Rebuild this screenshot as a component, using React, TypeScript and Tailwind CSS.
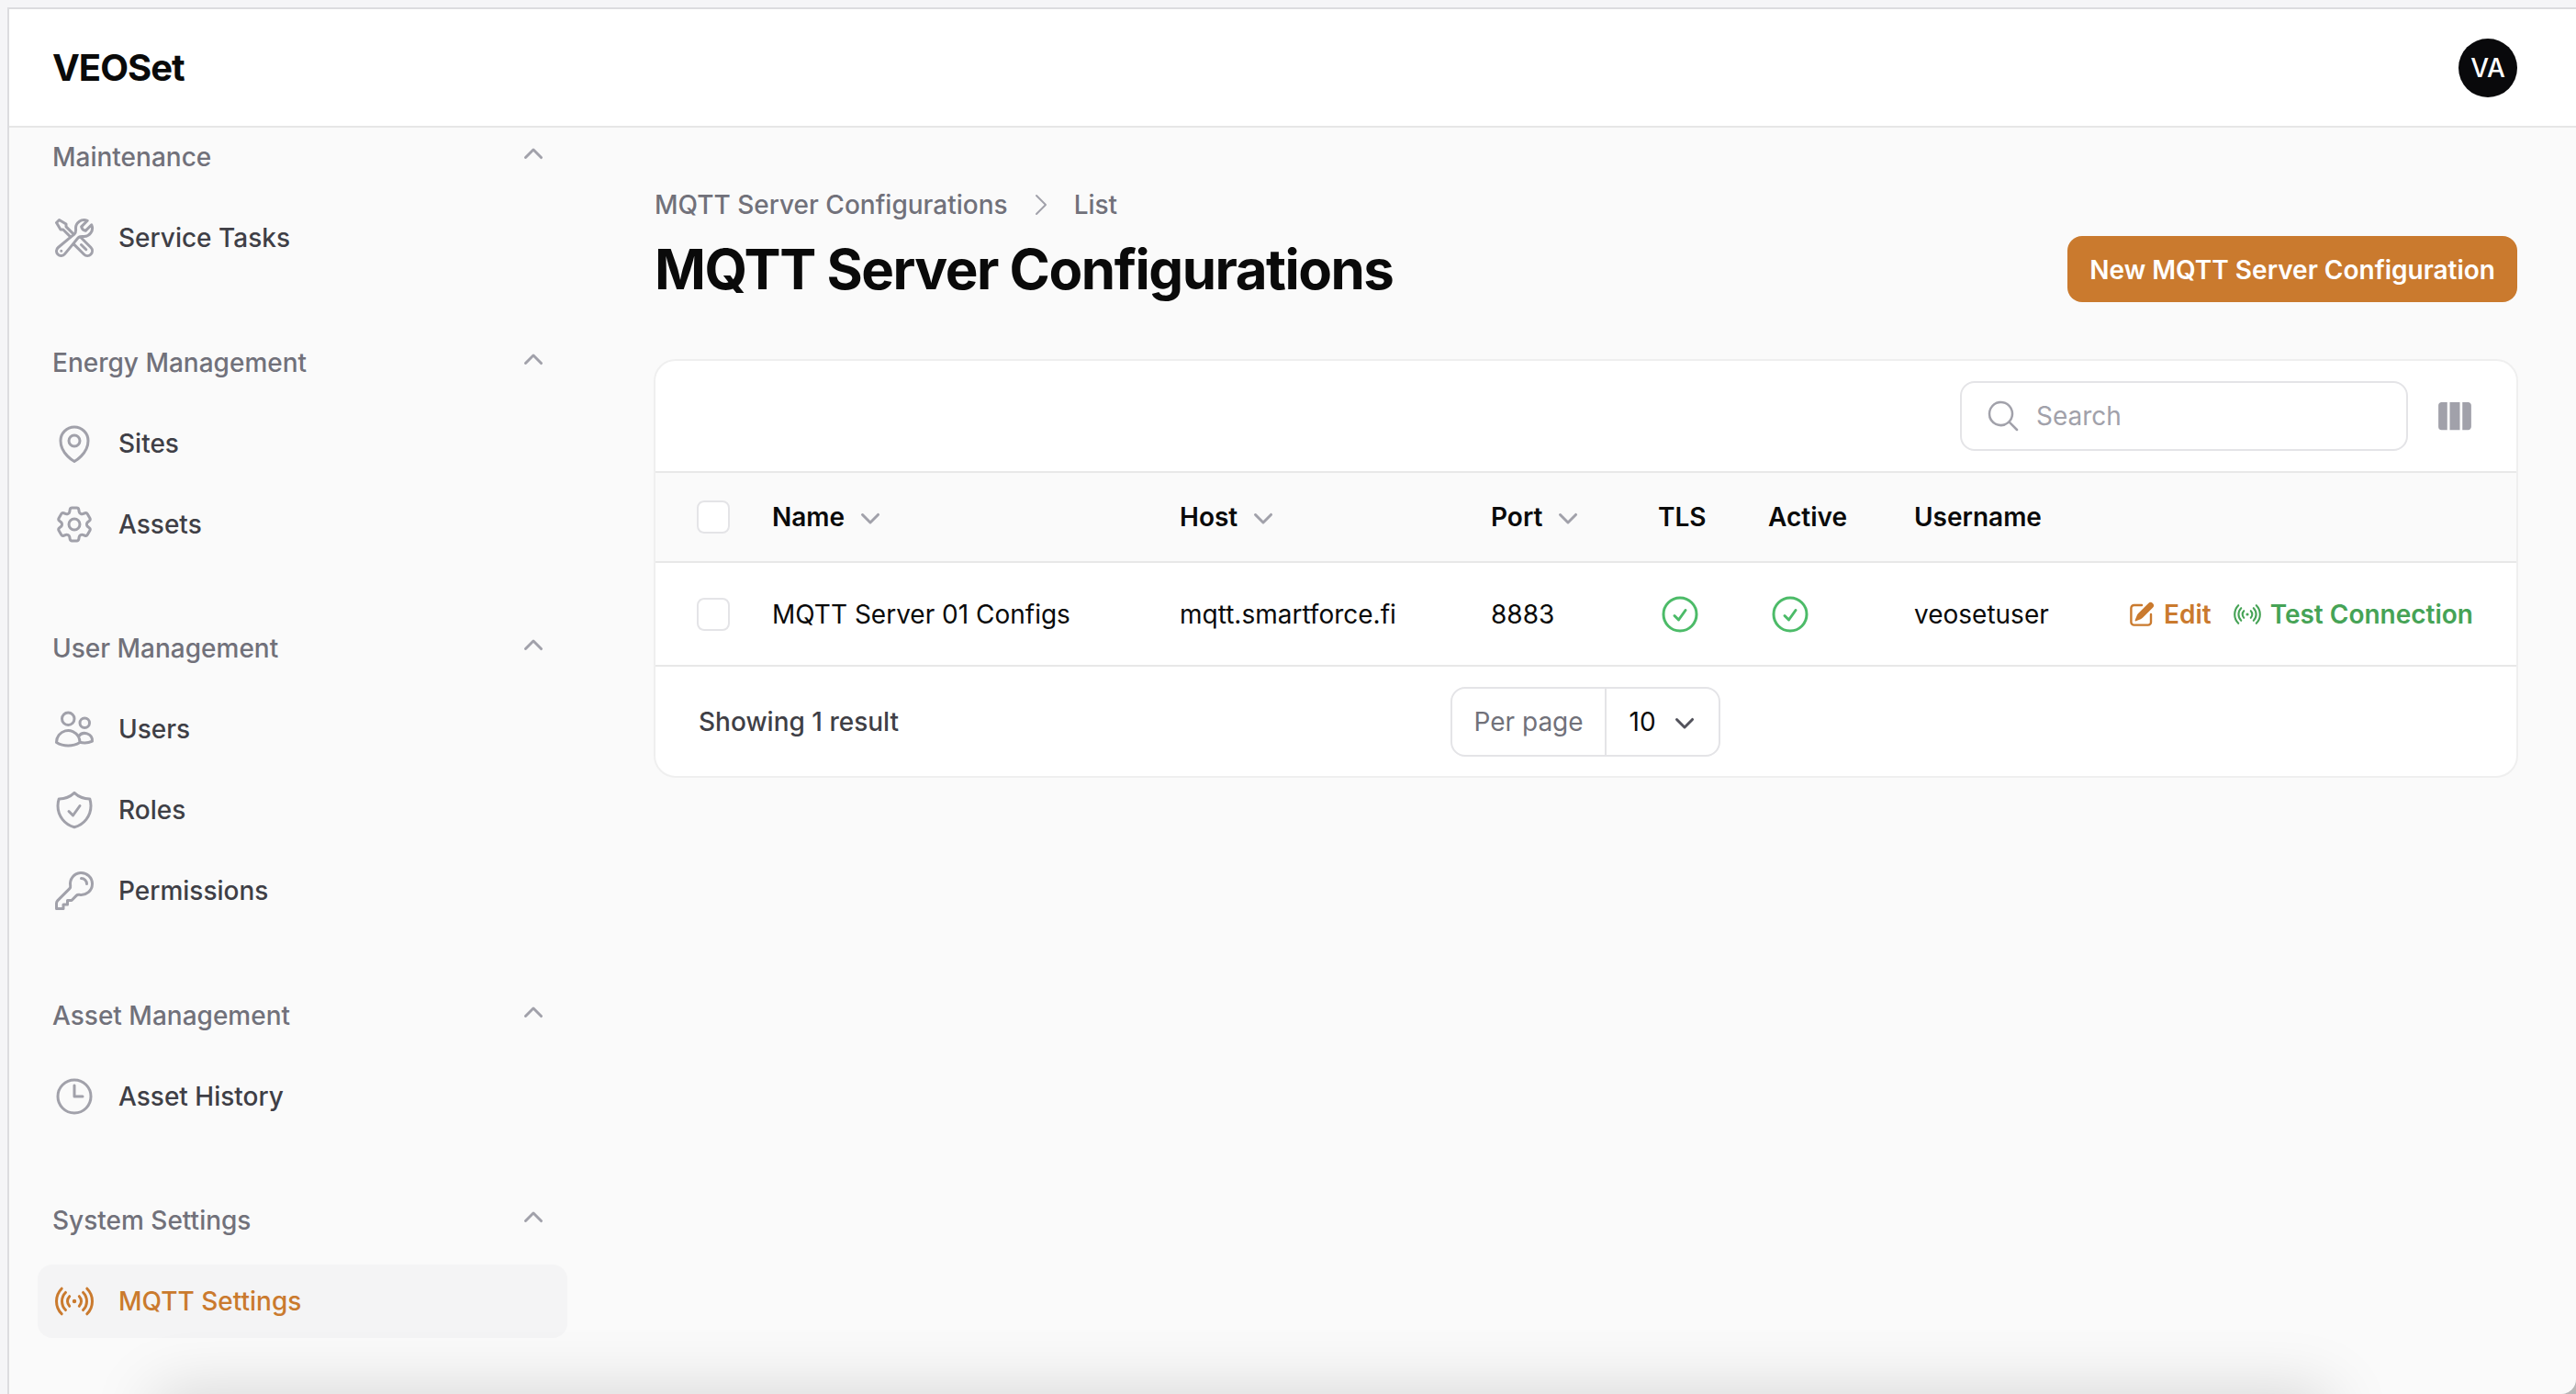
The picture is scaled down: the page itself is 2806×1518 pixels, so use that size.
import {
  HiMiniChevronDown,
  HiMiniChevronUp,
  HiChevronRight,
  HiMagnifyingGlass,
  HiMiniPencilSquare,
  HiOutlineCheckCircle,
  HiOutlineClock,
  HiOutlineCog6Tooth,
  HiOutlineKey,
  HiOutlineMapPin,
  HiOutlineShieldCheck,
  HiOutlineSignal,
  HiOutlineUsers,
  HiOutlineWrenchScrewdriver,
  HiViewColumns,
} from "react-icons/hi2";

const navGroups = [
  {
    label: "Maintenance",
    items: [{ label: "Service Tasks", icon: HiOutlineWrenchScrewdriver }],
  },
  {
    label: "Energy Management",
    items: [
      { label: "Sites", icon: HiOutlineMapPin },
      { label: "Assets", icon: HiOutlineCog6Tooth },
    ],
  },
  {
    label: "User Management",
    items: [
      { label: "Users", icon: HiOutlineUsers },
      { label: "Roles", icon: HiOutlineShieldCheck },
      { label: "Permissions", icon: HiOutlineKey },
    ],
  },
  {
    label: "Asset Management",
    items: [{ label: "Asset History", icon: HiOutlineClock }],
  },
  {
    label: "System Settings",
    items: [{ label: "MQTT Settings", icon: HiOutlineSignal, active: true }],
  },
];

const columns = [
  { label: "Name", sortable: true },
  { label: "Host", sortable: true },
  { label: "Port", sortable: true },
  { label: "TLS" },
  { label: "Active" },
  { label: "Username" },
];

const Checkbox = () => (
  <div className="h-[36px] w-[36px] rounded-[8px] border-2 border-[#e4e4e7] bg-white" />
);

const Sidebar = () => (
  <aside className="flex w-[641px] shrink-0 flex-col gap-[75.5px] overflow-hidden pl-[31px] pr-[33px] pt-[12px]">
    {navGroups.map((group) => (
      <div key={group.label} className="flex flex-col gap-[8px]">
        <div className="mb-[20px] flex h-[40px] items-center justify-between pl-[16px] pr-[17px]">
          <span className="text-[28px] font-medium text-[#71717a]">{group.label}</span>
          <HiMiniChevronUp className="h-[40px] w-[40px] -translate-y-[2px] text-[#a1a1aa]" />
        </div>
        {group.items.map((item) => {
          const Icon = item.icon;
          return (
            <div
              key={item.label}
              className={
                item.active
                  ? "flex h-[80px] items-center gap-[24px] rounded-[16px] bg-[#f4f4f5] px-[16px]"
                  : "flex h-[80px] items-center gap-[24px] rounded-[16px] px-[16px]"
              }
            >
              <Icon
                className={
                  item.active
                    ? "h-[48px] w-[48px] text-[#ca7a2e]"
                    : "h-[48px] w-[48px] text-[#a1a1aa]"
                }
              />
              <span
                className={
                  item.active
                    ? "text-[28px] font-medium text-[#ca7a2e]"
                    : "text-[28px] font-medium text-[#3f3f46]"
                }
              >
                {item.label}
              </span>
            </div>
          );
        })}
      </div>
    ))}
  </aside>
);

const ConfigTable = () => (
  <div className="-ml-[1px] -mr-[1px] rounded-[24px] border-2 border-[#efefef] bg-white">
    <div className="flex h-[120px] items-center justify-end gap-[29px] pr-[45px]">
      <div className="flex h-[76px] w-[488px] items-center gap-[16px] rounded-[16px] border-2 border-[#e4e4e7] pl-[25px]">
        <HiMagnifyingGlass className="h-[40px] w-[40px] text-[#a1a1aa]" />
        <span className="text-[28px] text-[#a1a1aa]">Search</span>
      </div>
      <HiViewColumns className="h-[44px] w-[44px] text-[#a1a1aa]" />
    </div>
    <table className="w-full table-fixed border-y-2 border-[#e8e8e8] text-left text-[28px] text-[#0a0a0a]">
      <colgroup>
        <col className="w-[103px]" />
        <col className="w-[444px]" />
        <col className="w-[339px]" />
        <col className="w-[182px]" />
        <col className="w-[120px]" />
        <col className="w-[159px]" />
        <col />
      </colgroup>
      <thead>
        <tr className="h-[98px] border-b-2 border-[#e8e8e8] bg-[#fafafa]">
          <th className="pl-[45px]">
            <Checkbox />
          </th>
          {columns.map((col) => (
            <th key={col.label} className="px-[24px] font-semibold">
              <span className="flex items-center gap-[8px]">
                {col.label}
                {col.sortable && <HiMiniChevronDown className="h-[40px] w-[40px] text-[#a1a1aa]" />}
              </span>
            </th>
          ))}
          <th />
        </tr>
      </thead>
      <tbody>
        <tr className="h-[113px]">
          <td className="pl-[45px]">
            <Checkbox />
          </td>
          <td className="px-[24px]">MQTT Server 01 Configs</td>
          <td className="px-[24px]">mqtt.smartforce.fi</td>
          <td className="px-[24px]">8883</td>
          <td className="px-[24px]">
            <HiOutlineCheckCircle className="h-[48px] w-[48px] text-[#4cbb68]" />
          </td>
          <td className="px-[24px]">
            <HiOutlineCheckCircle className="h-[48px] w-[48px] text-[#4cbb68]" />
          </td>
          <td className="px-[24px]">veosetuser</td>
          <td className="pr-[47px]">
            <div className="flex items-center justify-end gap-[22px] whitespace-nowrap font-semibold">
              <span className="flex items-center gap-[8px] text-[#ca7a2e]">
                <HiMiniPencilSquare className="h-[32px] w-[32px]" />
                Edit
              </span>
              <span className="flex items-center gap-[8px] text-[#46a356]">
                <HiOutlineSignal className="h-[34px] w-[34px]" />
                Test Connection
              </span>
            </div>
          </td>
        </tr>
      </tbody>
    </table>
    <div className="grid h-[119px] grid-cols-3 items-center px-[47px] text-[28px]">
      <span className="font-medium text-[#3f3f46]">Showing 1 result</span>
      <div className="flex h-[76px] w-[294px] items-center justify-self-center rounded-[16px] border-2 border-[#e4e4e7]">
        <span className="flex h-full items-center border-r-2 border-[#e4e4e7] px-[23px] text-[#71717a]">
          Per page
        </span>
        <span className="flex items-center gap-[11px] pl-[25px] text-[#0a0a0a]">
          10
          <HiMiniChevronDown className="h-[40px] w-[40px] text-[#52525b]" />
        </span>
      </div>
    </div>
  </div>
);

export default function App() {
  return (
    <div className="relative h-[1518px] w-[2806px] overflow-hidden bg-[#f5f5f7] pl-[8px] pt-[8px] font-['Inter',sans-serif]">
      <div className="absolute bottom-0 right-0 h-[16px] w-[16px] bg-[#b8b8b8]" />
      <div className="relative flex h-full flex-col overflow-hidden rounded-br-[16px] border-l-2 border-t-2 border-[#dcdcdf] bg-[#fafafa]">
        <header className="flex h-[129px] shrink-0 items-center justify-between border-b-2 border-[#e6e6e6] bg-white pl-[47px] pr-[64px]">
          <span className="text-[40px] font-bold tracking-tight text-[#0a0a0a]">VEOSet</span>
          <div className="flex h-[64px] w-[64px] items-center justify-center rounded-full bg-[#09090b] text-[28px] font-medium text-white">
            VA
          </div>
        </header>
        <div className="flex min-h-0 flex-1">
          <Sidebar />
          <main className="flex-1 pl-[62px] pr-[64px] pt-[64px]">
            <nav className="flex h-[40px] items-center gap-[20px] text-[28px] font-medium text-[#71717a]">
              <span>MQTT Server Configurations</span>
              <HiChevronRight className="h-[32px] w-[32px] text-[#a1a1aa]" />
              <span>List</span>
            </nav>
            <div className="mt-[5px] flex items-center justify-between">
              <h1 className="text-[60px] font-bold tracking-tight text-[#0a0a0a]">
                MQTT Server Configurations
              </h1>
              <button className="flex h-[72px] items-center rounded-[16px] bg-[#ca7a2e] px-[24px] pt-[1px] text-[28px] font-semibold text-white">
                New MQTT Server Configuration
              </button>
            </div>
            <div className="mt-[53px]">
              <ConfigTable />
            </div>
          </main>
        </div>
        <div className="absolute -bottom-[60px] left-[160px] right-[270px] h-[60px] shadow-[0_0_70px_rgba(0,0,0,0.17)]" />
      </div>
    </div>
  );
}
